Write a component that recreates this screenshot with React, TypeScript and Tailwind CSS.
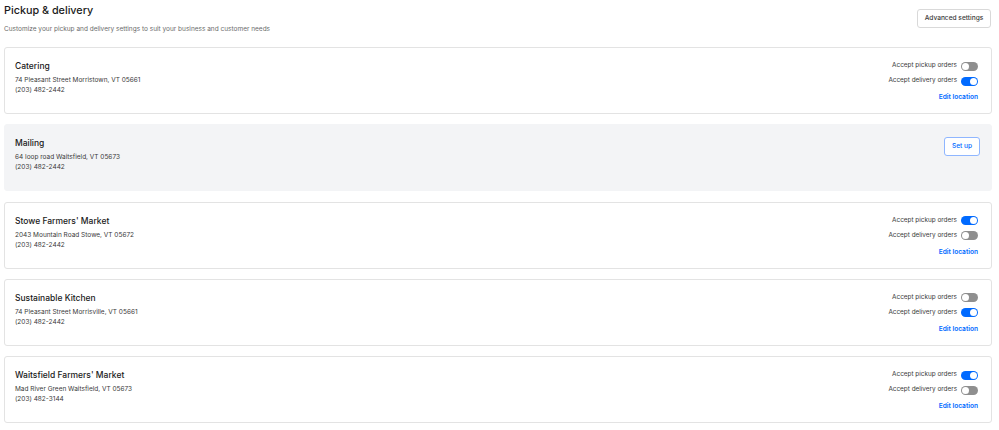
import { useState } from 'react';

type Location = {
  name: string;
  address: string;
  phone: string;
  pickup?: boolean;
  delivery?: boolean;
  setup?: boolean;
};

const LOCATIONS: Location[] = [
  { name: 'Catering', address: '74 Pleasant Street Morristown, VT 05661', phone: '(203) 482-2442', pickup: false, delivery: true },
  { name: 'Mailing', address: '64 loop road Waitsfield, VT 05673', phone: '(203) 482-2442', setup: true },
  { name: "Stowe Farmers' Market", address: '2043 Mountain Road Stowe, VT 05672', phone: '(203) 482-2442', pickup: true, delivery: false },
  { name: 'Sustainable Kitchen', address: '74 Pleasant Street Morrisville, VT 05661', phone: '(203) 482-2442', pickup: false, delivery: true },
  { name: "Waitsfield Farmers' Market", address: 'Mad River Green Waitsfield, VT 05673', phone: '(203) 482-3144', pickup: true, delivery: false },
];

function Toggle({ initial }: { initial: boolean }) {
  const [on, setOn] = useState(initial);
  return (
    <button
      onClick={() => setOn(!on)}
      className={`relative flex h-[9px] w-[17px] items-center rounded-full px-[1px] ${on ? 'justify-end bg-[#006aff]' : 'justify-start bg-[#8f8f8f]'}`}
    >
      <span className="h-[7px] w-[7px] rounded-full bg-white" />
    </button>
  );
}

function LocationCard({ loc }: { loc: Location }) {
  return (
    <div
      className={`flex h-[67px] justify-between rounded-[3px] border pl-[10px] pt-[12px] ${loc.setup ? 'border-[#f3f4f6] bg-[#f3f4f6] pr-[11px]' : 'border-[#e3e3e3] bg-white pr-[13px]'}`}
    >
      <div className="flex flex-col">
        <div className="text-[8.5px] font-medium leading-[12px] text-[#1a1a1a]">{loc.name}</div>
        <div className="mt-[3px] text-[6.5px] leading-[10px] text-[#3a3a3a]">{loc.address}</div>
        <div className="text-[6.5px] leading-[10px] text-[#3a3a3a]">{loc.phone}</div>
      </div>
      {loc.setup ? (
        <div className="flex items-start">
          <button className="h-[19px] w-[36px] rounded-[3px] border border-[#8fb6ff] bg-white text-[6.6px] font-medium leading-none text-[#006aff]">
            Set up
          </button>
        </div>
      ) : (
        <div className="flex flex-col items-end gap-[3px]">
          <div className="flex h-[12px] items-center gap-[4px]">
            <span className="text-[6.4px] text-[#3a3a3a]">Accept pickup orders</span>
            <Toggle initial={!!loc.pickup} />
          </div>
          <div className="flex h-[12px] items-center gap-[4px]">
            <span className="text-[6.4px] text-[#3a3a3a]">Accept delivery orders</span>
            <Toggle initial={!!loc.delivery} />
          </div>
          <a className="mt-[1px] text-[6.6px] font-semibold leading-[12px] text-[#006aff]">Edit location</a>
        </div>
      )}
    </div>
  );
}

export default function App() {
  return (
    <div className="h-[430px] w-[999px] overflow-hidden bg-white pl-[4px] pr-[7px] font-['Inter',sans-serif]">
      <div className="flex items-start justify-between">
        <div className="pt-[3px]">
          <h1 className="text-[10.8px] font-medium leading-[16px] text-[#1a1a1a]">Pickup &amp; delivery</h1>
          <p className="mt-[5px] text-[6.5px] leading-[10px] text-[#6b6b6b]">
            Customize your pickup and delivery settings to suit your business and customer needs
          </p>
        </div>
        <button className="mr-[1px] mt-[9px] h-[19px] w-[74px] rounded-[3px] border border-[#d9d9d9] bg-white text-[6.6px] font-medium text-[#3a3a3a]">
          Advanced settings
        </button>
      </div>
      <div className="mt-[13px] flex flex-col gap-[10.25px]">
        {LOCATIONS.map((loc) => (
          <LocationCard key={loc.name} loc={loc} />
        ))}
      </div>
    </div>
  );
}
